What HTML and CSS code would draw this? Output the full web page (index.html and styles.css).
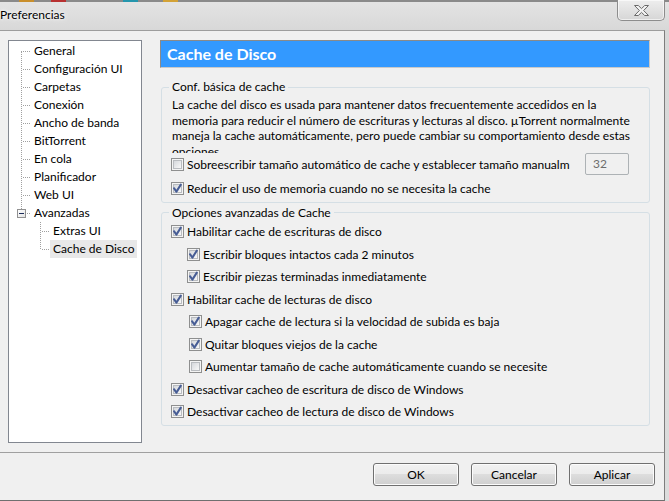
FILE: index.html
```html
<!DOCTYPE html>
<html lang="es">
<head>
<meta charset="utf-8">
<title>Preferencias</title>
<link rel="stylesheet" href="styles.css">
</head>
<body>
<div class="window">
  <header class="titlebar">
    <div class="taskstrip">
      <span class="ts ts-orange"></span>
      <span class="ts ts-red"></span>
      <span class="ts ts-teal"></span>
      <span class="ts ts-gold"></span>
    </div>
    <span class="title">Preferencias</span>
    <button class="close" type="button" aria-label="Cerrar">
      <svg width="17" height="13" viewBox="0 0 17 13"><polygon points="1.5,1.5 5.3,1.5 8.5,4.6 11.7,1.5 15.5,1.5 10.6,6.5 15.5,11.5 11.7,11.5 8.5,8.4 5.3,11.5 1.5,11.5 6.4,6.5" fill="#f4f4f4" stroke="#6a6a6a" stroke-width="1" stroke-linejoin="round"/></svg>
    </button>
  </header>

  <div class="client">
    <div class="main">
      <nav class="tree">
        <ul class="tree-root">
          <li class="node"><span class="label">General</span></li>
          <li class="node"><span class="label">Configuración UI</span></li>
          <li class="node"><span class="label">Carpetas</span></li>
          <li class="node"><span class="label">Conexión</span></li>
          <li class="node"><span class="label">Ancho de banda</span></li>
          <li class="node"><span class="label">BitTorrent</span></li>
          <li class="node"><span class="label">En cola</span></li>
          <li class="node"><span class="label">Planificador</span></li>
          <li class="node"><span class="label">Web UI</span></li>
          <li class="node open">
            <span class="exp"></span><span class="label">Avanzadas</span>
            <ul class="tree-sub">
              <li class="subnode"><span class="label">Extras UI</span></li>
              <li class="subnode"><span class="label sel">Cache de Disco</span></li>
            </ul>
          </li>
        </ul>
      </nav>

      <section class="panel">
        <h1 class="panel-title">Cache de Disco</h1>

        <fieldset class="group group-basic">
          <legend>Conf. básica de cache</legend>
          <p class="desc">La cache del disco es usada para mantener datos frecuentemente accedidos en la memoria para reducir el número de escrituras y lecturas al disco. µTorrent normalmente maneja la cache automáticamente, pero puede cambiar su comportamiento desde estas opciones.</p>
          <div class="row row-override">
            <span class="cb"></span>
            <span class="text clip">Sobreescribir tamaño automático de cache y establecer tamaño manualm</span>
            <span class="numbox">32</span>
          </div>
          <div class="row row-reduce">
            <span class="cb on"><svg width="13" height="13" viewBox="0 0 13 13"><polyline points="3,6.2 5.4,9.6 9.8,2.6" fill="none" stroke="#475d95" stroke-width="2" stroke-linecap="round" stroke-linejoin="round"/></svg></span>
            <span class="text">Reducir el uso de memoria cuando no se necesita la cache</span>
          </div>
        </fieldset>

        <fieldset class="group group-adv">
          <legend>Opciones avanzadas de Cache</legend>
          <div class="row opt">
            <span class="cb on"><svg width="13" height="13" viewBox="0 0 13 13"><polyline points="3,6.2 5.4,9.6 9.8,2.6" fill="none" stroke="#475d95" stroke-width="2" stroke-linecap="round" stroke-linejoin="round"/></svg></span>
            <span class="text">Habilitar cache de escrituras de disco</span>
          </div>
          <div class="row opt sub1">
            <span class="cb on"><svg width="13" height="13" viewBox="0 0 13 13"><polyline points="3,6.2 5.4,9.6 9.8,2.6" fill="none" stroke="#475d95" stroke-width="2" stroke-linecap="round" stroke-linejoin="round"/></svg></span>
            <span class="text">Escribir bloques intactos cada 2 minutos</span>
          </div>
          <div class="row opt sub1">
            <span class="cb on"><svg width="13" height="13" viewBox="0 0 13 13"><polyline points="3,6.2 5.4,9.6 9.8,2.6" fill="none" stroke="#475d95" stroke-width="2" stroke-linecap="round" stroke-linejoin="round"/></svg></span>
            <span class="text">Escribir piezas terminadas inmediatamente</span>
          </div>
          <div class="row opt">
            <span class="cb on"><svg width="13" height="13" viewBox="0 0 13 13"><polyline points="3,6.2 5.4,9.6 9.8,2.6" fill="none" stroke="#475d95" stroke-width="2" stroke-linecap="round" stroke-linejoin="round"/></svg></span>
            <span class="text">Habilitar cache de lecturas de disco</span>
          </div>
          <div class="row opt sub2">
            <span class="cb on"><svg width="13" height="13" viewBox="0 0 13 13"><polyline points="3,6.2 5.4,9.6 9.8,2.6" fill="none" stroke="#475d95" stroke-width="2" stroke-linecap="round" stroke-linejoin="round"/></svg></span>
            <span class="text">Apagar cache de lectura si la velocidad de subida es baja</span>
          </div>
          <div class="row opt sub2">
            <span class="cb on"><svg width="13" height="13" viewBox="0 0 13 13"><polyline points="3,6.2 5.4,9.6 9.8,2.6" fill="none" stroke="#475d95" stroke-width="2" stroke-linecap="round" stroke-linejoin="round"/></svg></span>
            <span class="text">Quitar bloques viejos de la cache</span>
          </div>
          <div class="row opt sub2">
            <span class="cb"></span>
            <span class="text">Aumentar tamaño de cache automáticamente cuando se necesite</span>
          </div>
          <div class="row opt">
            <span class="cb on"><svg width="13" height="13" viewBox="0 0 13 13"><polyline points="3,6.2 5.4,9.6 9.8,2.6" fill="none" stroke="#475d95" stroke-width="2" stroke-linecap="round" stroke-linejoin="round"/></svg></span>
            <span class="text">Desactivar cacheo de escritura de disco de Windows</span>
          </div>
          <div class="row opt">
            <span class="cb on"><svg width="13" height="13" viewBox="0 0 13 13"><polyline points="3,6.2 5.4,9.6 9.8,2.6" fill="none" stroke="#475d95" stroke-width="2" stroke-linecap="round" stroke-linejoin="round"/></svg></span>
            <span class="text">Desactivar cacheo de lectura de disco de Windows</span>
          </div>
        </fieldset>
      </section>
    </div>

    <footer class="footer">
      <button class="btn" type="button">OK</button>
      <button class="btn" type="button">Cancelar</button>
      <button class="btn" type="button">Aplicar</button>
    </footer>
  </div>
</div>
</body>
</html>
```

FILE: styles.css
```css
* { box-sizing: border-box; }

html, body {
  margin: 0;
  padding: 0;
}

body {
  width: 669px;
  height: 501px;
  overflow: hidden;
  font-family: Lato, "Liberation Sans", sans-serif;
  font-size: 12px;
  color: #000;
  background: #dcdcdc;
}

.window {
  position: relative;
  width: 669px;
  height: 501px;
  background: linear-gradient(#e4e4e4, #d8d8d8 30px, #dcdcdc);
}

/* ---------- title bar ---------- */
.titlebar {
  position: relative;
  height: 30px;
  display: flex;
  flex-direction: column;
}

.taskstrip {
  height: 2px;
  background: #8a8a8a;
  display: flex;
}

.ts { height: 2px; width: 15px; }
.ts-orange { margin-left: 19px; background: #c98f2c; }
.ts-red { margin-left: 17px; background: #b83131; }
.ts-teal { margin-left: 57px; background: #2596ad; }
.ts-gold { margin-left: 25px; background: #d3a236; }

.title {
  padding-left: 0;
  line-height: 26px;
  font-size: 12px;
  color: #000;
  text-shadow: 0 0 6px #fff, 0 0 3px #fff;
}

.close {
  position: absolute;
  top: 0;
  right: 4px;
  width: 48px;
  height: 21px;
  padding: 0;
  border: 1px solid #8d8d8d;
  border-top: none;
  border-radius: 0 0 5px 5px;
  background: linear-gradient(#eeeeee, #e2e2e2 50%, #d6d6d6);
  box-shadow: inset 0 0 0 1px rgba(255,255,255,0.6);
  display: flex;
  align-items: center;
  justify-content: center;
}

.close svg { display: block; margin-top: 1px; }

/* ---------- client ---------- */
.client {
  width: 665px;
  height: 471px;
  background: #f0f0f0;
  border-top: 1px solid #9d9d9d;
  border-right: 1px solid #7d7d7d;
  border-bottom: 1px solid #6f6f6f;
  display: flex;
  flex-direction: column;
}

.main {
  height: 421px;
  display: flex;
  align-items: flex-start;
  padding: 9px 0 0 8px;
}

/* ---------- tree ---------- */
.tree {
  width: 134px;
  height: 403px;
  background: #fff;
  border: 1px solid #828790;
  flex: none;
}

.tree ul {
  list-style: none;
  margin: 0;
  padding: 0;
}

.tree-root {
  position: relative;
  padding-top: 1px !important;
}

.tree-root::before {
  content: "";
  position: absolute;
  left: 12px;
  top: 10px;
  height: 158px;
  border-left: 1px dotted #a0a0a0;
}

.node {
  position: relative;
  padding-left: 22px;
}

.node > .label,
.node > .exp { vertical-align: top; }

.node::before {
  content: "";
  position: absolute;
  left: 14px;
  top: 9px;
  width: 7px;
  border-top: 1px dotted #a0a0a0;
}

.label {
  display: inline-block;
  height: 18px;
  line-height: 18px;
  padding: 0 3px;
  white-space: nowrap;
}

.label.sel { background: #e8e8e8; }

.exp {
  position: absolute;
  left: 8px;
  top: 5px;
  width: 9px;
  height: 9px;
  border: 1px solid #919191;
  background: linear-gradient(135deg, #ffffff, #e3e3e3);
  z-index: 1;
}

.exp::after {
  content: "";
  position: absolute;
  left: 1px;
  top: 3px;
  width: 5px;
  height: 1px;
  background: #1c2c5a;
}

.tree-sub {
  position: relative;
  margin-left: -22px !important;
}

.tree-sub::before {
  content: "";
  position: absolute;
  left: 31px;
  top: 0;
  height: 27px;
  border-left: 1px dotted #a0a0a0;
}

.subnode {
  position: relative;
  padding-left: 41px;
}

.subnode::before {
  content: "";
  position: absolute;
  left: 33px;
  top: 9px;
  width: 7px;
  border-top: 1px dotted #a0a0a0;
}

/* ---------- right panel ---------- */
.panel {
  width: 490px;
  margin-left: 18px;
  flex: none;
}

.panel-title {
  margin: 0;
  height: 28px;
  background: #3399ff;
  border: 1px solid;
  border-color: #8a8a8a #c9c9c9 #c9c9c9 #8a8a8a;
  color: #fff;
  font-size: 16px;
  font-weight: 700;
  line-height: 25px;
  padding-left: 6px;
}

.group {
  margin: 11px 0 0 1px;
  width: 489px;
  padding: 0 20px 0 10px;
  border: 1px solid #d5dfe5;
  border-radius: 3px;
  min-width: 0;
}

.group legend {
  margin-left: -3px;
  padding: 0 3px;
  line-height: 16px;
}

.group-basic { padding-bottom: 4px; }

.desc {
  margin: 2px 0 0;
  height: 56px;
  overflow: hidden;
  line-height: 15.5px;
  width: 460px;
}

.row {
  display: flex;
  align-items: center;
  white-space: nowrap;
}

.row .cb { margin-left: -1px; margin-right: 3px; }

.row-override { height: 22px; }
.row-reduce { height: 18px; margin-top: 4.5px; }

.clip {
  flex: 1;
  overflow: hidden;
  min-width: 0;
}

.numbox {
  flex: none;
  width: 44px;
  height: 22px;
  margin-left: 8px;
  border: 1px solid #adb2b5;
  border-radius: 2px;
  background: #f0f0f0;
  color: #6d6d6d;
  padding-left: 7px;
  line-height: 20px;
}

.group-adv { margin-top: 2px; padding-bottom: 1.5px; }

.opt { height: 22.5px; }
.sub1 { padding-left: 16px; }
.sub2 { padding-left: 18px; }

/* checkbox */
.cb {
  position: relative;
  flex: none;
  width: 13px;
  height: 13px;
  border: 1px solid #8e8f8f;
  background: #f4f4f4;
}

.cb::before {
  content: "";
  position: absolute;
  inset: 1px;
  border: 1px solid #b9bcc0;
  background: linear-gradient(135deg, #d5d8dc, #f8f8f8);
}

.cb svg {
  position: absolute;
  left: -1px;
  top: -1px;
  display: block;
}

/* ---------- footer ---------- */
.footer {
  flex: 1;
  border-top: 1px solid #a0a0a0;
  display: flex;
  justify-content: flex-end;
  align-items: flex-start;
  gap: 12px;
  padding: 10px 9px 0 0;
}

.btn {
  width: 86px;
  height: 23px;
  padding: 0;
  font-family: inherit;
  font-size: 12px;
  color: #000;
  border: 1px solid #707070;
  border-radius: 3px;
  background: linear-gradient(#f2f2f2, #ebebeb 50%, #dddddd 50%, #cfcfcf);
  box-shadow: inset 0 0 0 1px #fcfcfc;
}
```
